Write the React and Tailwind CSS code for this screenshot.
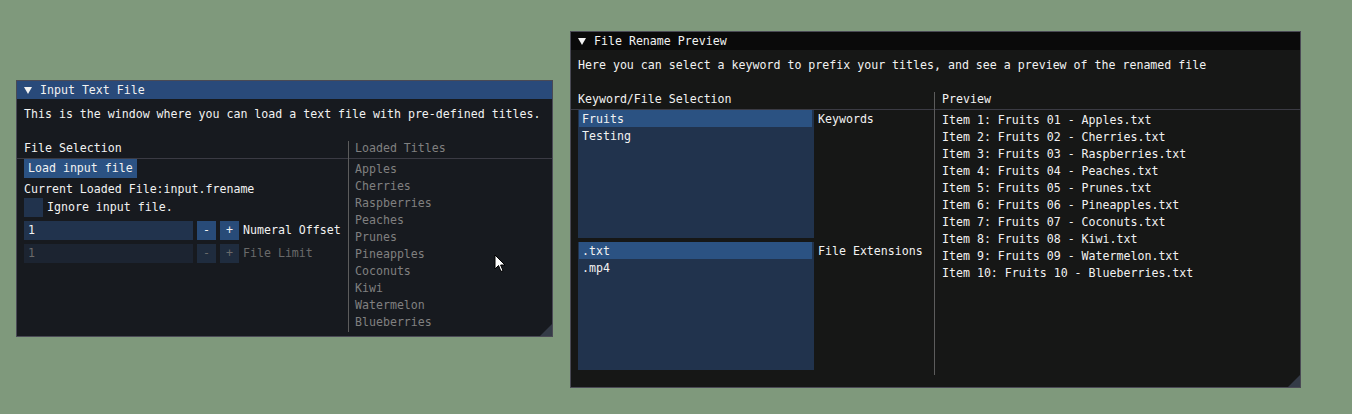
const loadedTitles = [
  'Apples',
  'Cherries',
  'Raspberries',
  'Peaches',
  'Prunes',
  'Pineapples',
  'Coconuts',
  'Kiwi',
  'Watermelon',
  'Blueberries',
];

const Triangle = () => (
  <svg width="8" height="7" viewBox="0 0 8 7" className="shrink-0">
    <polygon points="0,0 8,0 4,7" fill="#f2f2f2" />
  </svg>
);

const ResizeGrip = () => (
  <svg width="12" height="12" viewBox="0 0 12 12" className="absolute right-0 bottom-0">
    <polygon points="12,0 12,12 0,12" fill="#343b47" />
  </svg>
);

const Cursor = () => (
  <svg width="12" height="19" viewBox="0 0 12 19" className="absolute left-[494px] top-[254px]">
    <path d="M1 1 L1 15 L4.5 11.5 L7 17.5 L9 16.6 L6.6 11 L11 11 Z" fill="#ffffff" stroke="#000000" strokeWidth="1" strokeLinejoin="round" />
  </svg>
);

const TitleBar = ({ title, active }) => (
  <div className={`h-[18px] shrink-0 flex items-center pl-[7px] ${active ? 'bg-[#294a7a]' : 'bg-[#0a0a0a]'}`}>
    <Triangle />
    <span className="ml-[8px]">{title}</span>
  </div>
);

const InputText = () => (
  <div className="absolute left-[16px] top-[80px] w-[537px] h-[257px] flex flex-col border border-[#4a4a55] bg-[#171a1f]">
    <TitleBar title="Input Text File" active />
    <div className="flex flex-col px-[7px] pt-[8px]">
      <div className="h-[13px]">This is the window where you can load a text file with pre-defined titles.</div>

      {/* Columns */}
      <div className="mt-[21px] flex">
        <div className="w-[324px] flex flex-col">
          <div className="-ml-[7px] pl-[7px] h-[18px] border-b border-[#3b3b44]">File Selection</div>
          <div className="h-[19px] self-start px-[4px] flex items-center bg-[#2b5283]">Load input file</div>
          <div className="mt-[4px] h-[13px]">Current Loaded File:input.frename</div>
          <div className="mt-[3px] h-[19px] flex items-center">
            <div className="w-[19px] h-[19px] bg-[#21334d]" />
            <span className="ml-[4px]">Ignore input file.</span>
          </div>
          <div className="mt-[4px] h-[19px] flex gap-[4px]">
            <div className="w-[169px] bg-[#21334d] pl-[4px] flex items-center">1</div>
            <div className="w-[19px] bg-[#284b78] flex items-center justify-center">-</div>
            <div className="w-[19px] bg-[#284b78] flex items-center justify-center">+</div>
            <div className="flex items-center">Numeral Offset</div>
          </div>
          <div className="mt-[4px] h-[19px] flex gap-[4px] text-[#6a6a6a]">
            <div className="w-[169px] bg-[#1c2431] pl-[4px] flex items-center">1</div>
            <div className="w-[19px] bg-[#1f2c3e] flex items-center justify-center">-</div>
            <div className="w-[19px] bg-[#1f2c3e] flex items-center justify-center">+</div>
            <div className="flex items-center">File Limit</div>
          </div>
        </div>
        <div className="flex-1 flex flex-col border-l border-[#5c5c5c] pb-[4px]">
          <div className="-mr-[7px] pl-[6px] h-[18px] border-b border-[#3b3b44] text-[#808080]">Loaded Titles</div>
          <div className="pt-[3px] pl-[6px] flex flex-col gap-[4px] text-[#808080]">
            {loadedTitles.map((t) => (
              <div key={t} className="h-[13px]">{t}</div>
            ))}
          </div>
        </div>
      </div>
    </div>
    <ResizeGrip />
  </div>
);

const ListBox = ({ items, selected }) => (
  <div className="w-[236px] h-[128px] bg-[#21334d] flex flex-col">
    {items.map((item) => (
      <div
        key={item}
        className={`h-[17px] ml-[1px] mr-[2px] pl-[3px] pt-[1px] flex items-center ${item === selected ? 'bg-[#2b5282]' : ''}`}
      >
        {item}
      </div>
    ))}
  </div>
);

const RenamePreview = () => (
  <div className="absolute left-[570px] top-[31px] w-[731px] h-[357px] flex flex-col border border-[#4a4a55] bg-[#161716]">
    <TitleBar title="File Rename Preview" />
    <div className="flex flex-col px-[7px] pt-[8px]">
      <div className="h-[13px]">Here you can select a keyword to prefix your titles, and see a preview of the renamed file</div>

      <div className="mt-[21px] flex">
        <div className="w-[356px] flex flex-col pb-[5px]">
          <div className="-ml-[7px] pl-[7px] h-[18px] border-b border-[#3b3b44]">Keyword/File Selection</div>
          <div className="flex">
            <ListBox items={['Fruits', 'Testing']} selected="Fruits" />
            <div className="ml-[4px] pt-[2px]">Keywords</div>
          </div>
          <div className="mt-[4px] flex">
            <ListBox items={['.txt', '.mp4']} selected=".txt" />
            <div className="ml-[4px] pt-[2px]">File Extensions</div>
          </div>
        </div>
        <div className="flex-1 flex flex-col border-l border-[#5c5c5c]">
          <div className="-mr-[7px] pl-[7px] h-[18px] border-b border-[#3b3b44]">Preview</div>
          <div className="pt-[3px] pl-[7px] flex flex-col gap-[4px]">
            {loadedTitles.map((t, i) => (
              <div key={t} className="h-[13px] whitespace-pre">
                {`Item ${i + 1}: Fruits ${String(i + 1).padStart(2, '0')} - ${t}.txt`}
              </div>
            ))}
          </div>
        </div>
      </div>
    </div>
    <ResizeGrip />
  </div>
);

export default function App() {
  return (
    <div className="relative w-[1352px] h-[414px] overflow-hidden bg-[#7f997c] text-[#f2f2f2] font-['DejaVu_Sans_Mono',monospace] text-[11.6px] leading-[15px]">
      <InputText />
      <RenamePreview />
      <Cursor />
    </div>
  );
}
